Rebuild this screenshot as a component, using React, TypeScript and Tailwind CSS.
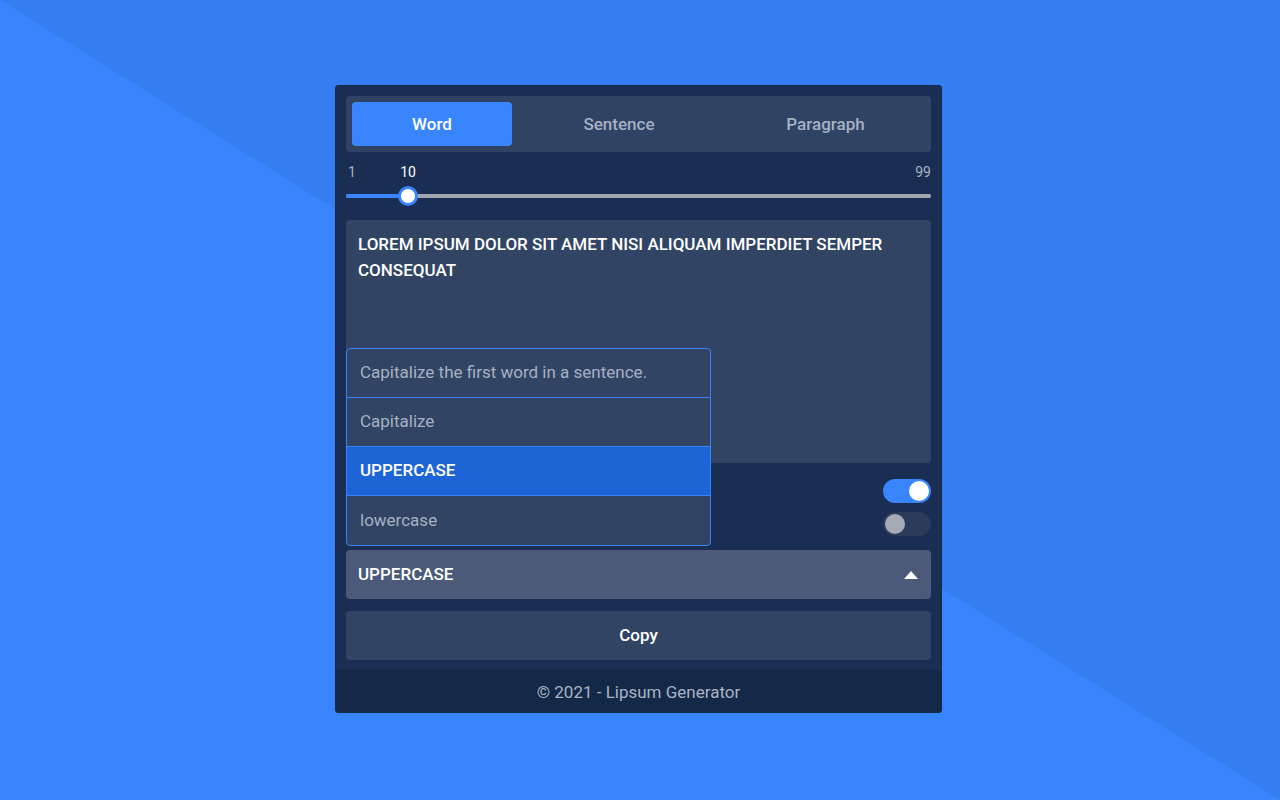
import React from "react";

const options = [
  "Capitalize the first word in a sentence.",
  "Capitalize",
  "UPPERCASE",
  "lowercase",
];

const Toggle = ({ on }: { on: boolean }) => {
  return (
    <div
      className={`w-[48px] h-[24px] rounded-full flex items-center px-[2px] ${
        on ? "bg-[#3885fd] justify-end" : "bg-[#2b3c5a] justify-start"
      }`}
    >
      <span
        className={`w-[20px] h-[20px] rounded-full ${
          on ? "bg-white" : "bg-[#a4abb6]"
        }`}
      />
    </div>
  );
};

const App = () => {
  const selected = "UPPERCASE";

  return (
    <div className="w-full h-[800px] flex pl-[335px] pt-[85px] bg-[linear-gradient(to_top_right,#3885fd_50%,#347ef1_50%)] font-[Roboto,sans-serif]">
      <div className="w-[607px] h-[628px] self-start flex flex-col bg-[#1a2e53] border border-[#142a4b] rounded-[3px]">
        <div className="flex flex-col px-[10px] pt-[10px]">
          {/* tabs */}
          <div className="h-[56px] bg-[#2f4365] rounded-[4px] p-[6px] flex">
            <button className="w-[160px] bg-[#3885fd] rounded-[4px] pt-[2px] text-white text-[17px] font-medium">
              Word
            </button>
            <button className="w-[214px] pt-[2px] text-[#a6b1c3] text-[17px] font-medium">
              Sentence
            </button>
            <button className="flex-1 pt-[2px] text-[#a6b1c3] text-[17px] font-medium">
              Paragraph
            </button>
          </div>

          {/* slider */}
          <div className="relative h-[16px] mt-[12px] text-[14px] leading-[16px] text-[#a9b3c4]">
            <span className="absolute left-[2px]">1</span>
            <span className="absolute left-[62px] -translate-x-1/2 text-white">10</span>
            <span className="absolute right-0">99</span>
          </div>
          <div className="relative h-[20px] mt-[6px] flex items-center">
            <div className="w-full h-[4px] rounded-full bg-[#a1a8b4] flex">
              <div className="w-[62px] h-full rounded-full bg-[#3885fd]" />
            </div>
            <span className="absolute left-[52px] top-0 w-[20px] h-[20px] rounded-full bg-white border-[3px] border-[#3885fd]" />
          </div>

          {/* output */}
          <div className="mt-[14px] h-[243px] bg-[#314463] rounded-[4px] px-[12px] py-[11px] text-white text-[17px] font-medium leading-[26px]">
            LOREM IPSUM DOLOR SIT AMET NISI ALIQUAM IMPERDIET SEMPER CONSEQUAT
          </div>

          {/* toggles */}
          <div className="mt-[16px] flex justify-end">
            <Toggle on={true} />
          </div>
          <div className="mt-[9px] flex justify-end">
            <Toggle on={false} />
          </div>

          {/* select */}
          <div className="relative mt-[14px]">
            <div className="absolute bottom-full mb-[4px] left-0 w-[365px] bg-[#314463] border border-[#3883f8] rounded-[4px] overflow-hidden divide-y divide-[#3883f8] z-10">
              {options.map((opt) => (
                <div
                  key={opt}
                  className={`h-[49px] flex items-center px-[13px] text-[17px] ${
                    opt === selected
                      ? "bg-[#1d65d7] text-white font-medium"
                      : "text-[#a6b1c3]"
                  }`}
                >
                  {opt}
                </div>
              ))}
            </div>
            <div className="h-[49px] bg-[#4a5a78] rounded-[4px] flex items-center justify-between pl-[12px] pr-[13px] text-white text-[17px] font-medium">
              <span>UPPERCASE</span>
              <svg width="14" height="8" viewBox="0 0 14 8">
                <path d="M7 0 L14 8 L0 8 Z" fill="white" />
              </svg>
            </div>
          </div>

          {/* copy */}
          <button className="mt-[12px] h-[49px] bg-[#314463] rounded-[4px] text-white text-[17px] font-medium">
            Copy
          </button>
        </div>

        <div className="mt-[10px] flex-1 bg-[#142847] flex items-center justify-center pt-[3px] text-[#a9b3c4] text-[17px]">
          © 2021 - Lipsum Generator
        </div>
      </div>
    </div>
  );
};

export default App;
